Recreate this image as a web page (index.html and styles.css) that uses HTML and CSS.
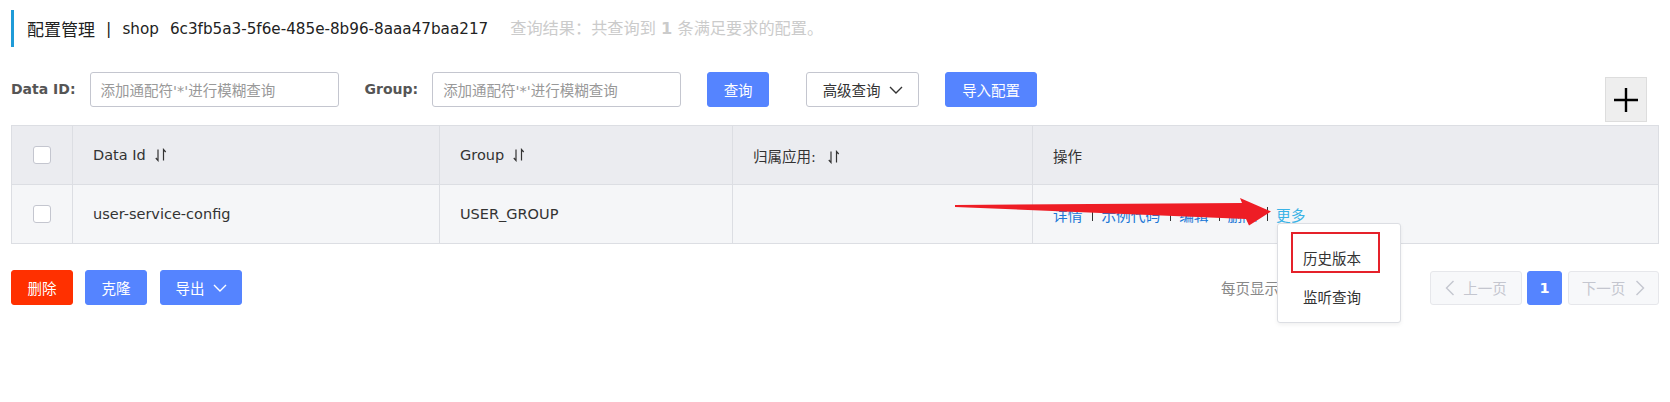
FILE: index.html
```html
<!DOCTYPE html>
<html lang="zh-CN">
<head>
<meta charset="utf-8">
<title>配置管理</title>
<link rel="stylesheet" href="styles.css">
</head>
<body>
<div class="page">
  <div class="title-row">
    <span class="title">配置管理<span class="title-sep">|</span><span class="title-id"><span class="ns">shop</span>6c3fb5a3-5f6e-485e-8b96-8aaa47baa217</span></span>
    <span class="result">查询结果：共查询到 <b>1</b> 条满足要求的配置。</span>
  </div>

  <div class="search-row">
    <span class="lbl">Data ID:</span>
    <div class="input"><span class="ph">添加通配符'*'进行模糊查询</span></div>
    <span class="lbl lbl-group">Group:</span>
    <div class="input"><span class="ph">添加通配符'*'进行模糊查询</span></div>
    <button class="btn primary btn-query">查询</button>
    <button class="btn normal btn-adv">高级查询<svg class="chev" width="14" height="8" viewBox="0 0 14 8"><polyline points="1,1 7,7 13,1" fill="none" stroke="#333" stroke-width="1.4"/></svg></button>
    <button class="btn primary btn-import">导入配置</button>
    <button class="plus"><svg width="26" height="26" viewBox="0 0 26 26"><path d="M13 1V25M1 13H25" stroke="#000" stroke-width="2.4"/></svg></button>
  </div>

  <table class="grid">
    <colgroup>
      <col class="c1"><col class="c2"><col class="c3"><col class="c4"><col>
    </colgroup>
    <thead>
      <tr>
        <th class="chk-cell"><span class="chk"></span></th>
        <th>Data Id<svg class="sort" width="12" height="14" viewBox="0 0 12 14"><path d="M3 1.5V12.5L0.8 10M8.5 12.5V1.5L10.7 4" fill="none" stroke="#333" stroke-width="1.2"/></svg></th>
        <th>Group<svg class="sort" width="12" height="14" viewBox="0 0 12 14"><path d="M3 1.5V12.5L0.8 10M8.5 12.5V1.5L10.7 4" fill="none" stroke="#333" stroke-width="1.2"/></svg></th>
        <th>归属应用:<svg class="sort sort-wide" width="12" height="14" viewBox="0 0 12 14"><path d="M3 1.5V12.5L0.8 10M8.5 12.5V1.5L10.7 4" fill="none" stroke="#333" stroke-width="1.2"/></svg></th>
        <th>操作</th>
      </tr>
    </thead>
    <tbody>
      <tr>
        <td class="chk-cell"><span class="chk"></span></td>
        <td>user-service-config</td>
        <td>USER_GROUP</td>
        <td></td>
        <td>
          <div class="ops">
            <a class="op">详情</a><span class="sep"></span>
            <a class="op">示例代码</a><span class="sep"></span>
            <a class="op">编辑</a><span class="sep"></span>
            <a class="op">删除</a><span class="sep"></span>
            <a class="op more">更多</a>
          </div>
        </td>
      </tr>
    </tbody>
  </table>

  <div class="footer">
    <button class="btn danger btn-del">删除</button>
    <button class="btn primary btn-clone">克隆</button>
    <button class="btn primary btn-export">导出<svg class="chev" width="14" height="8" viewBox="0 0 14 8"><polyline points="1,1 7,7 13,1" fill="none" stroke="#fff" stroke-width="1.4"/></svg></button>
    <div class="pager">
      <span class="page-size">每页显示：</span>
      <button class="pg pg-prev"><svg width="10" height="16" viewBox="0 0 10 16"><polyline points="8.5,1 1.5,8 8.5,15" fill="none" stroke="#c4c6cf" stroke-width="1.4"/></svg>上一页</button>
      <button class="pg pg-cur">1</button>
      <button class="pg pg-next">下一页<svg width="10" height="16" viewBox="0 0 10 16"><polyline points="1.5,1 8.5,8 1.5,15" fill="none" stroke="#c4c6cf" stroke-width="1.4"/></svg></button>
    </div>
  </div>
</div>

<div class="menu">
  <div class="menu-item">历史版本</div>
  <div class="menu-item">监听查询</div>
  <div class="mark"></div>
</div>

<svg class="anno" width="1670" height="402" viewBox="0 0 1670 402">
  <polygon points="955,205 1242,203 1240,198 1271,211.5 1249,225.5 1246,219 955,207" fill="#ee1d25"/>
</svg>
</body>
</html>
```

FILE: styles.css
```css
* { box-sizing: border-box; }

body {
  margin: 0;
  background: #fff;
  font-family: "DejaVu Sans", "Noto Sans CJK SC", sans-serif;
  font-size: 14.5px;
  color: #333;
}

.page {
  padding: 10px 11px 0;
}

/* title */
.title-row {
  display: flex;
  align-items: center;
  height: 37px;
  border-left: 3px solid #1f9bd8;
  padding-left: 13px;
}
.title {
  font-family: "Noto Sans CJK SC", sans-serif;
  font-size: 17px;
  color: #222;
  line-height: 24px;
  display: flex;
  align-items: center;
}
.title-sep {
  font-family: "DejaVu Sans", sans-serif;
  font-size: 16px;
  margin: 0 11px 0 11px;
}
.title-id {
  font-family: "DejaVu Sans", sans-serif;
  font-size: 15.2px;
}
.title-id .ns { margin-right: 11px; }
.result {
  margin-left: 22px;
  color: #cbcbcb;
  font-size: 16.2px;
  line-height: 24px;
}

/* search row */
.search-row {
  display: flex;
  align-items: flex-start;
  height: 50px;
  margin-top: 25px;
}
.lbl {
  font-family: "DejaVu Sans", sans-serif;
  font-weight: bold;
  font-size: 14px;
  color: #555;
  line-height: 35px;
  margin-right: 14px;
}
.lbl-group { margin-left: 26px; margin-right: 14px; }
.input {
  width: 249px;
  height: 35px;
  border: 1px solid #c4c6cf;
  border-radius: 3px;
  padding-left: 10px;
  display: flex;
  align-items: center;
  color: #999;
  background: #fff;
}
.btn {
  height: 35px;
  border-radius: 3px;
  font-family: "Noto Sans CJK SC", sans-serif;
  font-size: 14.5px;
  display: inline-flex;
  align-items: center;
  justify-content: center;
  padding: 0;
  cursor: pointer;
}
.primary { background: #5584ff; border: 1px solid #5584ff; color: #fff; }
.danger { background: #ff3000; border: 1px solid #ff3000; color: #fff; }
.normal { background: #fff; border: 1px solid #c4c6cf; color: #333; }
.chev { margin-left: 8px; }
.btn-query { margin-left: 26px; width: 62px; }
.btn-adv { margin-left: 37px; width: 113px; }
.btn-import { margin-left: 26px; width: 92px; }
.plus {
  margin-left: auto;
  margin-right: 12px;
  margin-top: 5px;
  width: 42px;
  height: 45px;
  background: #eeeeee;
  border: 1px solid #dddddd;
  padding: 0;
  display: flex;
  align-items: center;
  justify-content: center;
}

/* table */
.grid {
  width: 100%;
  margin-top: 3px;
  border-collapse: collapse;
  table-layout: fixed;
}
.grid col.c1 { width: 61px; }
.grid col.c2 { width: 367px; }
.grid col.c3 { width: 293px; }
.grid col.c4 { width: 300px; }
.grid th, .grid td {
  border: 1px solid #dcdee3;
  text-align: left;
  font-weight: normal;
  padding: 0 0 0 20px;
  vertical-align: middle;
  color: #333;
}
.grid thead tr { height: 59px; background: #ebecf0; }
.grid tbody tr { height: 59px; background: #f5f6f8; }
.grid th.chk-cell, .grid td.chk-cell { padding: 0; text-align: center; }
.chk {
  display: inline-block;
  width: 18px;
  height: 18px;
  border: 1px solid #c4c6cf;
  border-radius: 3px;
  background: #fff;
  vertical-align: middle;
}
.sort { margin-left: 9px; vertical-align: -2px; }
.sort-wide { margin-left: 12px; }

.ops { display: flex; align-items: center; }
.op { color: #2077d6; font-family: "Noto Sans CJK SC", sans-serif; font-size: 14.7px; }
.op.more { color: #3ab3e6; }
.sep {
  width: 1px;
  height: 14px;
  background: #333;
  margin: 0 8px 0 10px;
}

/* footer */
.footer {
  display: flex;
  align-items: center;
  margin-top: 26px;
}
.btn-del { width: 62px; }
.btn-clone { width: 62px; margin-left: 12px; }
.btn-export { width: 82px; margin-left: 13px; }
.pager {
  margin-left: auto;
  display: flex;
  align-items: center;
}
.page-size {
  width: 209px;
  color: #888;
  font-family: "Noto Sans CJK SC", sans-serif;
}
.pg {
  height: 34px;
  border-radius: 3px;
  font-family: "Noto Sans CJK SC", sans-serif;
  font-size: 14.5px;
  display: inline-flex;
  align-items: center;
  justify-content: center;
  padding: 0;
  border: 1px solid #e6e7eb;
  background: #f7f8fa;
  color: #c4c6cf;
}
.pg-prev { width: 92px; }
.pg-prev svg { margin-right: 8px; }
.pg-next { width: 91px; margin-left: 6px; }
.pg-next svg { margin-left: 10px; }
.pg-cur {
  width: 35px;
  margin-left: 5px;
  background: #5584ff;
  border-color: #5584ff;
  color: #fff;
  font-family: "DejaVu Sans", sans-serif;
  font-weight: bold;
}

/* dropdown overlay */
.menu {
  position: absolute;
  left: 1277px;
  top: 223px;
  width: 124px;
  height: 100px;
  background: #fff;
  border: 1px solid #dcdee3;
  border-radius: 3px;
  padding-top: 14px;
  box-shadow: 0 2px 4px rgba(0,0,0,0.06);
}
.menu-item {
  height: 39px;
  line-height: 39px;
  padding-left: 25px;
  font-family: "Noto Sans CJK SC", sans-serif;
  color: #333;
}
.mark {
  position: absolute;
  left: 13px;
  top: 8px;
  width: 89px;
  height: 41px;
  border: 2px solid #e5212a;
}

.anno {
  position: absolute;
  left: 0;
  top: 0;
  pointer-events: none;
}
```
